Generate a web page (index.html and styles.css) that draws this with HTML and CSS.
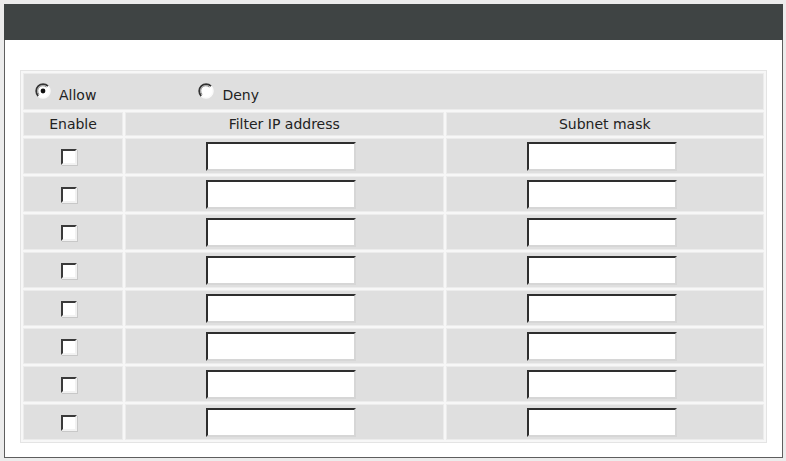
FILE: index.html
```html
<!DOCTYPE html>
<html>
<head>
<meta charset="utf-8">
<link rel="stylesheet" href="styles.css">
</head>
<body>
<div class="box">
  <div class="bar"></div>
  <div class="content">
    <table class="filter">
      <tr>
        <td colspan="3" class="mode">
          <span class="opt opt-allow">
            <svg class="radio" width="16" height="16" viewBox="0 0 16 16"><circle cx="8" cy="8" r="7" fill="#fff" stroke="#fafafa" stroke-width="1.5"/><path d="M3.2 13 A6.5 6.5 0 0 1 13 3.2" fill="none" stroke="#333" stroke-width="1.8"/><path d="M4.2 11.4 A4.8 4.8 0 0 1 11.4 4.2" fill="none" stroke="#8a8a8a" stroke-width="1"/><circle cx="8" cy="8" r="2.4" fill="#111"/></svg>
            <span class="lbl">Allow</span>
          </span>
          <span class="opt">
            <svg class="radio" width="16" height="16" viewBox="0 0 16 16"><circle cx="8" cy="8" r="7" fill="#fff" stroke="#fafafa" stroke-width="1.5"/><path d="M3.2 13 A6.5 6.5 0 0 1 13 3.2" fill="none" stroke="#333" stroke-width="1.8"/><path d="M4.2 11.4 A4.8 4.8 0 0 1 11.4 4.2" fill="none" stroke="#8a8a8a" stroke-width="1"/></svg>
            <span class="lbl">Deny</span>
          </span>
        </td>
      </tr>
      <tr class="head">
        <td class="c-en">Enable</td>
        <td class="c-ip">Filter IP address</td>
        <td class="c-mask">Subnet mask</td>
      </tr>
      <tr class="row"><td class="c-en"><span class="chk"></span></td><td><span class="inp"></span></td><td><span class="inp"></span></td></tr>
      <tr class="row"><td class="c-en"><span class="chk"></span></td><td><span class="inp"></span></td><td><span class="inp"></span></td></tr>
      <tr class="row"><td class="c-en"><span class="chk"></span></td><td><span class="inp"></span></td><td><span class="inp"></span></td></tr>
      <tr class="row"><td class="c-en"><span class="chk"></span></td><td><span class="inp"></span></td><td><span class="inp"></span></td></tr>
      <tr class="row"><td class="c-en"><span class="chk"></span></td><td><span class="inp"></span></td><td><span class="inp"></span></td></tr>
      <tr class="row"><td class="c-en"><span class="chk"></span></td><td><span class="inp"></span></td><td><span class="inp"></span></td></tr>
      <tr class="row"><td class="c-en"><span class="chk"></span></td><td><span class="inp"></span></td><td><span class="inp"></span></td></tr>
      <tr class="row"><td class="c-en"><span class="chk"></span></td><td><span class="inp"></span></td><td><span class="inp"></span></td></tr>
    </table>
  </div>
</div>
</body>
</html>
```
FILE: styles.css
```css
html, body {
  margin: 0;
  padding: 0;
  background: #ececec;
}
body {
  padding: 4px;
  font-family: "DejaVu Sans", Verdana, sans-serif;
  font-size: 14px;
  color: #222;
}
.box {
  width: 777px;
  height: 453px;
  background: #fff;
  border: 1px solid #5e5e5e;
  border-top: none;
  box-sizing: content-box;
}
.bar {
  height: 36px;
  margin: 0 -1px;
  background: #3f4444;
}
.content {
  padding: 30px 0 0 15px;
}
.filter {
  width: 747px;
  border-collapse: separate;
  border-spacing: 2px;
  border: 1px solid #e4e4e4;
  background: #f7f7f7;
}
.filter td {
  background: #dfdfdf;
  border: 1px solid #ececec;
  padding: 0;
  text-align: center;
}
.mode {
  height: 35px;
  text-align: left !important;
  padding-left: 11px !important;
}
.opt {
  display: inline-flex;
  align-items: flex-start;
}
.opt-allow {
  width: 159px;
}
.radio {
  display: block;
  flex: none;
  margin-top: 2px;
}
.lbl {
  margin-left: 8px;
  margin-top: 6px;
  line-height: 16px;
}
.head td {
  height: 22px;
  line-height: 22px;
}
.c-en { width: 98px; }
.row td {
  height: 34px;
}
.chk {
  display: inline-block;
  vertical-align: middle;
  width: 16px;
  height: 16px;
  box-sizing: border-box;
  margin-right: 8px;
  background: #fff;
  border: 2px solid;
  border-color: #3a3a3a #f2f2f2 #f2f2f2 #3a3a3a;
  box-shadow: 1px 1px 0 #c8c8c8;
}
.inp {
  display: inline-block;
  vertical-align: middle;
  width: 150px;
  height: 29px;
  box-sizing: border-box;
  margin-right: 6px;
  background: #fff;
  border: 2px solid;
  border-color: #2e2e2e #d6d6d6 #d6d6d6 #2e2e2e;
}
```
